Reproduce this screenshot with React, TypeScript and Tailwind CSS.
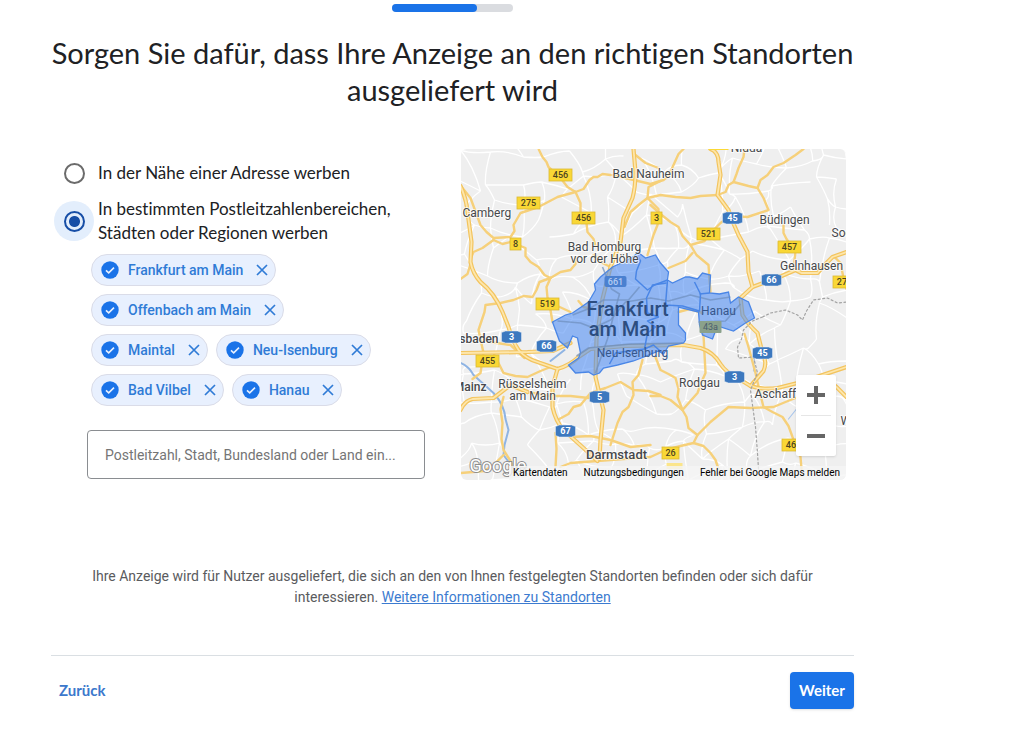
import { useState } from "react";

const initialLocations = [
  "Frankfurt am Main",
  "Offenbach am Main",
  "Maintal",
  "Neu-Isenburg",
  "Bad Vilbel",
  "Hanau",
];

const motorways = [
  "M0 37 Q6 50 7 63 L11 93 L10 113 Q12 124 20 133 Q34 144 42 163 L48 178 Q52 192 58 201 Q66 210 77 213 L97 220 Q110 216 118 208 L130 200 L165 197 L223 196 L240 199 Q253 203 260 215 Q265 223 277 229 L290 237 Q302 241 317 239 L337 234 L350 230 L386 218",
  "M0 204 L67 203 L92 202 L110 194",
  "M173 0 L175 23 Q175 38 172 49 L163 69 L160 93 L150 118 L142 150 L136 190 L135 228 L139 245 L143 261 L140 291 L139 310",
  "M250 0 Q258 3 258 13 L260 26 L257 46 L268 61 L271 70 L278 86 L287 103 L288 123 L292 138 L280 149 L282 166 Q288 176 297 184 L302 204 Q307 213 303 222 L290 237",
  "M97 220 L92 238 L92 258 Q95 272 103 281 L123 299 L137 312",
  "M0 261 Q4 252 12 250 L33 249 L50 236 L67 243",
  "M292 138 L300 135 L312 131 L335 121 L341 124 L357 124 L364 116 L372 108 L386 103",
  "M386 248 L376 238 L366 230",
];

const mainRoads = [
  "M78 0 L82 8 L86 13 L88 18 L100 29 L107 38 L115 43 L123 40 L129 31 L133 28 L137 28 L142 25 L150 26",
  "M115 43 L97 48 L78 58 L60 64 L53 76 L54 82 L50 88 L33 89 L26 83 L20 76 L10 49 L2 39",
  "M33 91 L22 99 L13 103 L10 110",
  "M33 91 L42 95 L50 93 L65 99 L65 107 L70 113 L78 118 L84 126 L90 129 L100 123 L110 121 L115 115 L115 109",
  "M90 129 L86 138 L87 149 L97 157 L110 163",
  "M90 129 L79 133 L76 141 L72 148 L63 147 L53 151 L40 154 L25 156 L24 163 L18 181 L23 204 L20 224 L12 230",
  "M0 130 L7 125 L10 115",
  "M115 43 L120 54 L120 63 L126 74 L127 83 L133 90 L135 97",
  "M133 106 L142 114 L152 119",
  "M175 6 L185 14 L198 19",
  "M152 26 L190 35 L203 31 L208 27 L213 16 L218 5 L223 0",
  "M200 32 L188 38 L187 49 L178 56 L170 63 L164 78",
  "M187 49 L198 60 L197 76 L193 86 L187 106",
  "M187 49 L200 46 L215 48 L230 49 L240 47 L257 46 L265 43 L268 36 L273 33 L288 37 L297 39 L303 49 L308 61 L287 68 L270 67",
  "M273 33 L276 25 L278 19 L283 8 L284 0",
  "M297 39 L300 31 L307 26 L313 18 L323 14 L335 6 L343 0",
  "M190 56 L200 65 L210 73 L218 78 L222 87 L230 96 L236 106 L248 116 L249 130 L250 143",
  "M230 96 L244 92 L250 84 L260 74 L270 67",
  "M232 104 L225 112 L208 119",
  "M323 76 L323 84 L326 90 L335 103 L333 119",
  "M374 108 L380 114 L383 129 L386 140",
  "M33 204 L38 214 L43 224 L55 227 L67 228 L80 222 L90 218",
  "M30 193 L50 196 L64 209",
  "M90 161 L92 173",
  "M43 248 L40 260 L42 274 L41 290 L43 301 L50 312 L54 320",
  "M67 243 L90 247 L110 247 L128 249 L139 243",
  "M97 271 L108 265 L113 258 L120 256 L130 244 L145 239 L160 233 L173 241 L188 242 L200 246",
  "M182 211 L178 226 L172 233 L173 246 L168 258 L162 263 L157 274 L150 296",
  "M110 288 L130 287 L150 291 L170 298 L190 296",
  "M95 284 L96 300 L95 318",
  "M0 324 L24 322 L34 315 L43 306",
  "M195 208 L200 221 L208 225 L215 229 L218 240 L217 248 L222 261 L226 268 L228 279 L237 286 L233 294 L220 297 L205 301 L190 308 L150 311 L137 312 L110 314 L100 318",
  "M190 247 L200 247 L210 251 L222 261",
  "M243 186 L244 205 L245 224 L241 233 L237 244 L222 261",
  "M237 286 L250 273 L268 258 L290 259 L313 258 L325 253 L335 249",
  "M284 185 L288 198 L295 224 L299 242 L303 258 L312 263 L322 268 L328 277 L332 288 L340 308 L341 320",
  "M233 294 L243 297 L250 304 L255 311 L258 320",
  "M218 163 L229 160 L242 164",
  "M118 152 L123 158 L132 160",
];

const border =
  "M302 168 L310 164 L325 161 L337 166 L342 171 L346 162 L353 151 L367 149 L377 154 L386 153 M302 168 L292 172 L283 181 L281 190 L277 198 L278 209 L293 208 L297 224 L290 241 L292 256 L295 278 L297 304 L298 320";

const area =
  "M92 173 L105 166 L112 164 L128 153 L135 141 L134 135 L140 128 L152 118 L165 112 L174 107 L177 103 L185 109 L195 106 L200 114 L208 123 L207 131 L212 134 L225 128 L229 128 L237 130 L242 124 L250 126 L249 144 L259 145 L268 143 L270 154 L278 148 L288 153 L294 169 L285 174 L273 182 L260 178 L255 182 L252 190 L242 186 L239 176 L238 163 L218 158 L218 176 L225 184 L225 191 L223 194 L208 197 L203 205 L198 202 L186 207 L173 212 L157 216 L143 219 L139 224 L133 226 L128 223 L115 224 L108 216 L118 209 L120 204 L117 189 L112 187 L107 199 L99 192 Z";

const areaBorders = [
  "M177 107 L180 112 L176 122 L175 130 L187 141 L194 136 L207 131",
  "M207 131 L205 156 L222 157 L239 162 L240 145 L234 133",
  "M239 145 L249 144",
  "M206 134 L192 136 L186 149 L187 164 L198 168 L187 172 L195 178 L187 184 L184 200 L193 196 L203 205",
  "M184 200 L175 201 L155 204 L149 215",
];

const areaRoads = [
  "M97 172 L120 174 L133 179 L150 171 L165 153 L190 149 L208 152 L230 146 L250 151 L270 148",
  "M142 118 L151 140 L159 145 L154 163 L147 190 L135 224",
  "M112 166 L130 159 L143 151 L168 151 L179 138",
  "M116 207 L128 199 L170 195 L222 194",
  "M238 173 L265 172 L280 155",
];

// Irregular web of side roads: a shifted grid where some links are missing.
const sideRoads = () => {
  const step = 22;
  const noise = (a: number, b: number) => {
    const n = Math.sin(a * 127.1 + b * 311.7) * 43758.5453;
    return n - Math.floor(n);
  };
  const x = (c: number, r: number) => Math.round(c * step + noise(c, r) * 24);
  const y = (c: number, r: number) => Math.round(r * step + noise(r + 40, c) * 24);
  const link = (c: number, r: number, c2: number, r2: number) => {
    const mx = Math.round((x(c, r) + x(c2, r2)) / 2 + noise(c, r2) * 10 - 5);
    const my = Math.round((y(c, r) + y(c2, r2)) / 2 + noise(r, c2) * 10 - 5);
    return `M${x(c, r)} ${y(c, r)}Q${mx} ${my} ${x(c2, r2)} ${y(c2, r2)}`;
  };
  let d = "";
  for (let r = -2; r < 17; r++) {
    for (let c = -2; c < 19; c++) {
      if (noise(c + 7, r + 3) > 0.2) d += link(c, r, c + 1, r);
      if (noise(c + 90, r + 5) > 0.25) d += link(c, r, c, r + 1);
    }
  }
  return d;
};

interface Shield {
  x: number;
  y: number;
  text: string;
}

const roadShields: Shield[] = [
  { x: 100, y: 26, text: "456" },
  { x: 68, y: 54, text: "275" },
  { x: 123, y: 69, text: "456" },
  { x: 55, y: 95, text: "8" },
  { x: 87, y: 155, text: "519" },
  { x: 196, y: 69, text: "3" },
  { x: 248, y: 85, text: "521" },
  { x: 329, y: 98, text: "457" },
  { x: 384, y: 133, text: "276" },
  { x: 27, y: 212, text: "455" },
  { x: 210, y: 304, text: "26" },
  { x: 333, y: 296, text: "469" },
];

const motorwayShields: Shield[] = [
  { x: 272, y: 69, text: "45" },
  { x: 311, y: 131, text: "66" },
  { x: 51, y: 188, text: "3" },
  { x: 86, y: 197, text: "66" },
  { x: 139, y: 248, text: "5" },
  { x: 105, y: 282, text: "67" },
  { x: 302, y: 204, text: "45" },
  { x: 274, y: 228, text: "3" },
];

const RoadShield = ({ x, y, text }: Shield) => {
  const width = 5 + text.length * 6;
  return (
    <g>
      <rect
        x={x - width / 2}
        y={y - 6}
        width={width}
        height="12"
        fill="#f9d735"
        stroke="#dcb935"
        strokeWidth="0.8"
      />
      <text x={x} y={y + 3} fontSize="9" textAnchor="middle" fill="#4a4320" fontWeight="500">
        {text}
      </text>
    </g>
  );
};

const MotorwayShield = ({ x, y, text }: Shield) => {
  return (
    <g>
      <path
        d={`M${x - 10} ${y - 4.5}l4 -1.5h12l4 1.5v9l-4 1.5h-12l-4 -1.5z`}
        fill="#3c78bf"
        stroke="#e9eef5"
        strokeWidth="0.5"
      />
      <text x={x} y={y + 3} fontSize="9" textAnchor="middle" fill="#fff" fontWeight="700">
        {text}
      </text>
    </g>
  );
};

const MapDrawing = () => {
  return (
    <svg
      viewBox="0 0 386 331"
      preserveAspectRatio="xMidYMid slice"
      className="block w-full h-full font-[Roboto,sans-serif]"
      role="img"
      aria-label="Karte"
    >
      <rect width="386" height="331" fill="#efefef" />
      <path d={sideRoads()} fill="none" stroke="#fff" strokeWidth="1.3" strokeLinejoin="round" />
      <g fill="none" strokeLinecap="round" strokeLinejoin="round">
        <path
          d="M0 214 Q8 217 13 226 L33 244 Q44 256 45 270 L48 281 L44 296 L43 306 L52 318 M90 212 L104 201"
          stroke="#8fb4e3"
          strokeWidth="2"
        />
        <path d="M340 255 L328 270 M294 208 L293 222" stroke="#a9c6ec" strokeWidth="1.2" />
        {mainRoads.map((d) => (
          <path key={d} d={d} stroke="#f6d07a" strokeWidth="2.4" />
        ))}
        {motorways.map((d) => (
          <path key={d} d={d} stroke="#f3c45e" strokeWidth="4.2" />
        ))}
        {motorways.map((d) => (
          <path key={d} d={d} stroke="#fde6ab" strokeWidth="1.8" />
        ))}
        <path d={border} stroke="#a3a3a3" strokeWidth="1.2" strokeDasharray="2 2.5" />
      </g>
      <path d={area} fill="#4285f4" fillOpacity="0.55" stroke="#4a86e6" strokeWidth="1.3" />
      <g fill="none" strokeLinejoin="round">
        {areaRoads.map((d) => (
          <path key={d} d={d} stroke="#6e8fbd" strokeWidth="1.6" opacity="0.7" />
        ))}
        {areaBorders.map((d) => (
          <path key={d} d={d} stroke="#4a86e6" strokeWidth="1.5" />
        ))}
      </g>
      <rect x="248" y="-3" width="20" height="4" fill="#fbd936" />
      <rect x="206" y="314" width="16" height="6" fill="#fbe58a" />
      {roadShields.map((shield) => (
        <RoadShield key={`${shield.x}-${shield.y}`} {...shield} />
      ))}
      {motorwayShields.map((shield) => (
        <MotorwayShield key={`${shield.x}-${shield.y}`} {...shield} />
      ))}
      <rect x="144" y="127" width="22" height="11" rx="2" fill="#4a80d0" />
      <text x="155" y="136" fontSize="9" textAnchor="middle" fill="#b5cdf3" fontWeight="500">
        661
      </text>
      <rect x="239" y="172" width="22" height="12" rx="1" fill="#8aa18b" />
      <text x="250" y="181" fontSize="9" textAnchor="middle" fill="#4a5d6d">
        43a
      </text>
      <g
        fontSize="12"
        fill="#46484b"
        stroke="#fff"
        strokeOpacity="0.7"
        strokeWidth="2"
        strokeLinejoin="round"
        paintOrder="stroke"
      >
        <text x="286" y="3" textAnchor="middle">Nidda</text>
        <text x="188" y="29" textAnchor="middle">Bad Nauheim</text>
        <text x="2" y="68">Camberg</text>
        <text x="144" y="102" textAnchor="middle">Bad Homburg</text>
        <text x="144" y="114" textAnchor="middle">vor der Höhe</text>
        <text x="324" y="75" textAnchor="middle">Büdingen</text>
        <text x="371" y="88">Soden</text>
        <text x="351" y="121" textAnchor="middle">Gelnhausen</text>
        <text x="72" y="239" textAnchor="middle">Rüsselsheim</text>
        <text x="72" y="251" textAnchor="middle">am Main</text>
        <text x="239" y="238" textAnchor="middle">Rodgau</text>
        <text x="294" y="249">Aschaffenburg</text>
        <text x="380" y="276">Wa</text>
        <g fontWeight="500">
          <text x="38" y="194" textAnchor="end">Wiesbaden</text>
          <text x="26" y="242" textAnchor="end">Mainz</text>
          <text x="156" y="310" textAnchor="middle" fontSize="13">Darmstadt</text>
        </g>
      </g>
      <g fill="#36578c" textAnchor="middle">
        <text x="258" y="166" fontSize="12">Hanau</text>
        <text x="172" y="208" fontSize="12">Neu-Isenburg</text>
        <g fontSize="20" fontWeight="500" fill="#2c4d80">
          <text x="167" y="167">Frankfurt</text>
          <text x="167" y="187">am Main</text>
        </g>
      </g>
      <text
        x="9"
        y="323"
        fontSize="18"
        fill="#fff"
        stroke="#8e8e8e"
        strokeWidth="2"
        paintOrder="stroke"
      >
        Google
      </text>
    </svg>
  );
};

const MapPanel = () => {
  return (
    <div className="relative w-full h-[331px] rounded-md overflow-hidden">
      <MapDrawing />
      <div className="absolute right-[10px] bottom-6 w-10 flex flex-col items-center bg-white rounded-xs shadow">
        <button aria-label="Vergrößern" className="h-10 w-full flex items-center justify-center">
          <svg viewBox="0 0 18 18" className="size-[18px]" fill="#666">
            <path d="M7 0h4v7h7v4h-7v7H7v-7H0V7h7z" />
          </svg>
        </button>
        <div className="h-px w-[30px] bg-[#e6e6e6]" />
        <button aria-label="Verkleinern" className="h-10 w-full flex items-center justify-center">
          <svg viewBox="0 0 18 18" className="size-[18px]" fill="#666">
            <path d="M0 7h18v4H0z" />
          </svg>
        </button>
      </div>
      <div className="absolute right-0 bottom-0 h-[14px] pl-1 pr-[6px] flex items-center gap-4 bg-[#f5f5f5]/80 text-[10px] leading-[14px] text-black">
        <button>Kartendaten</button>
        <a href="#nutzung">Nutzungsbedingungen</a>
        <a href="#fehler">Fehler bei Google Maps melden</a>
      </div>
    </div>
  );
};

interface ChipProps {
  name: string;
  onRemove: () => void;
}

const Chip = ({ name, onRemove }: ChipProps) => {
  return (
    <li className="h-8 flex items-center pl-[9px] pr-1 rounded-full border border-[#dadce8] bg-[#e8f0fe] text-[#2f7bd6]">
      <svg viewBox="0 0 18 18" className="size-[18px]">
        <circle cx="9" cy="9" r="8.7" fill="#1a73e8" />
        <path d="M5 9.3l2.7 2.6L13 6.6" fill="none" stroke="#e8f0fe" strokeWidth="1.6" />
      </svg>
      <span className="ml-[9px] text-sm font-medium">{name}</span>
      <button
        onClick={onRemove}
        aria-label={`${name} entfernen`}
        className="ml-[10px] size-[18px] flex items-center justify-center"
      >
        <svg viewBox="0 0 12 12" className="size-3">
          <path d="M1 1l10 10M11 1L1 11" fill="none" stroke="currentColor" strokeWidth="1.7" />
        </svg>
      </button>
    </li>
  );
};

interface RadioProps {
  id: string;
  label: string;
  checked: boolean;
  onChange: () => void;
}

const Radio = ({ id, label, checked, onChange }: RadioProps) => {
  return (
    <div className="flex items-center gap-1">
      <span
        className={`size-10 shrink-0 rounded-full flex items-center justify-center ${
          checked ? "bg-[#e3eefc]" : ""
        }`}
      >
        <input
          type="radio"
          id={id}
          name="location-type"
          checked={checked}
          onChange={onChange}
          className="appearance-none size-[21px] rounded-full border-2 border-[#6b6b6b] checked:border-[#174ea6] checked:bg-[radial-gradient(circle,#174ea6_5px,transparent_6px)]"
        />
      </span>
      <label htmlFor={id} className="text-[17px] leading-6 text-[#202124]">
        {label}
      </label>
    </div>
  );
};

const App = () => {
  const [mode, setMode] = useState("regions");
  const [locations, setLocations] = useState(initialLocations);

  const removeLocation = (name: string) => {
    setLocations(locations.filter((location) => location !== name));
  };

  return (
    <main className="min-h-screen bg-white pl-[51px] pr-[170px] pt-1 font-[Roboto,sans-serif]">
      <div className="mx-auto w-[121px] h-2 rounded-full bg-[#dadce0]">
        <div className="w-[85px] h-2 rounded-full bg-[#1a73e8]" />
      </div>
      <h1 className="mt-[22px] text-center font-[Lato,sans-serif] text-[29px] leading-[37px] text-[#202124] [font-variant-ligatures:none]">
        Sorgen Sie dafür, dass Ihre Anzeige an den richtigen Standorten ausgeliefert wird
      </h1>

      <div className="mt-[41px] pl-[3px] pr-2 flex justify-between gap-9">
        <div className="flex-1 max-w-[371px] pt-1">
          <div className="font-[Lato,sans-serif] [font-variant-ligatures:none]">
            <Radio
              id="near-address"
              label="In der Nähe einer Adresse werben"
              checked={mode === "address"}
              onChange={() => setMode("address")}
            />
            <div className="h-1" />
            <Radio
              id="regions"
              label="In bestimmten Postleitzahlenbereichen, Städten oder Regionen werben"
              checked={mode === "regions"}
              onChange={() => setMode("regions")}
            />
          </div>
          <ul className="mt-[9px] ml-[37px] max-w-[300px] flex flex-wrap gap-2">
            {locations.map((name) => (
              <Chip key={name} name={name} onRemove={() => removeLocation(name)} />
            ))}
          </ul>
          <input
            type="text"
            aria-label="Standorte"
            placeholder="Postleitzahl, Stadt, Bundesland oder Land ein..."
            className="mt-6 ml-[33px] w-[338px] h-[49px] px-[17px] rounded-sm border border-[#8a8d91] text-sm placeholder:text-[#757575]"
          />
        </div>
        <div className="w-[386px]">
          <MapPanel />
        </div>
      </div>

      <p className="mt-[86px] px-5 text-center text-sm leading-[21px] text-[#5a5b5e]">
        Ihre Anzeige wird für Nutzer ausgeliefert, die sich an den von Ihnen festgelegten Standorten
        befinden oder sich dafür interessieren.{" "}
        <a href="#standorte" className="text-[#3c7bd0] underline">
          Weitere Informationen zu Standorten
        </a>
      </p>

      <div className="mt-[47px] pt-4 flex items-center justify-between border-t border-[#dadfe3] font-[Lato,sans-serif]">
        <button className="px-2 text-[15px] font-bold text-[#3c78cc]">Zurück</button>
        <button className="w-16 h-[37px] rounded-sm bg-[#1a73e8] text-[15px] font-bold text-white shadow">
          Weiter
        </button>
      </div>
    </main>
  );
};

export default App;
